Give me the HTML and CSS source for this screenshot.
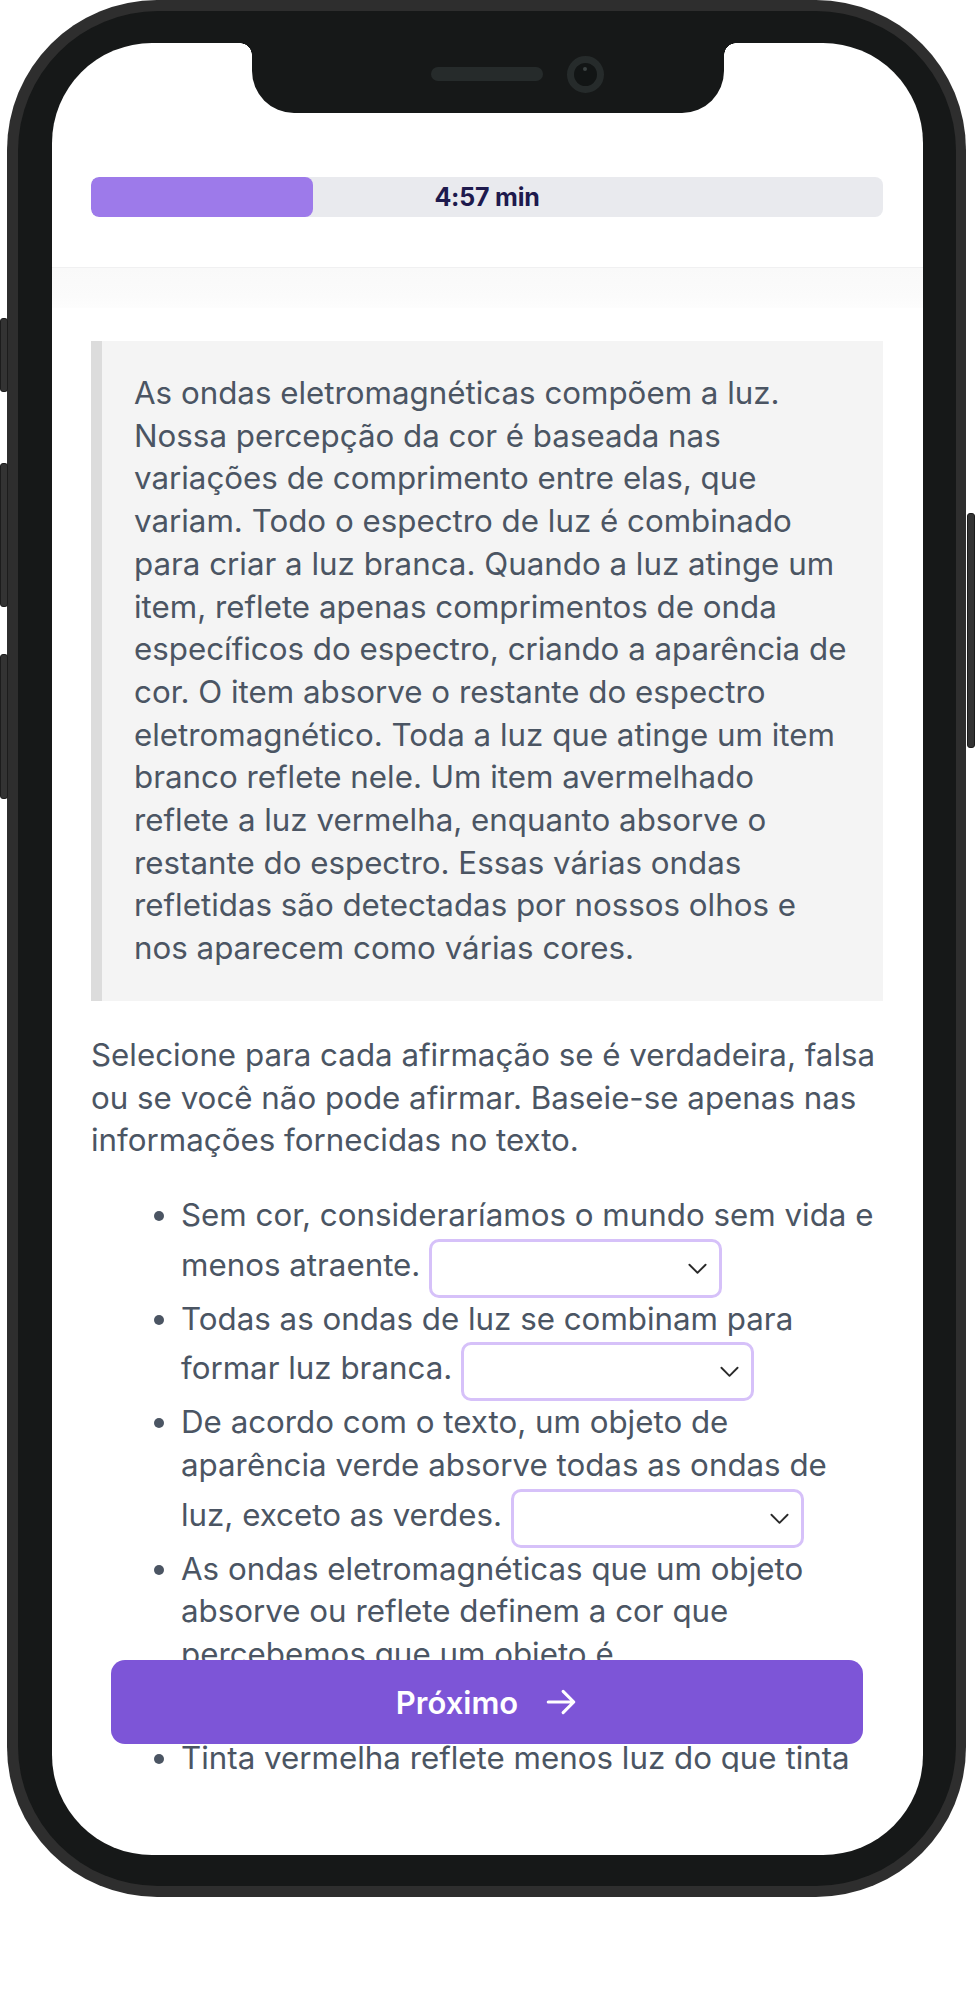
FILE: index.html
```html
<!DOCTYPE html>
<html lang="pt-BR">
<head>
<meta charset="utf-8">
<title>Leitura</title>
<link rel="stylesheet" href="styles.css">
</head>
<body>
<div class="phone">
  <span class="side side-l1"></span>
  <span class="side side-l2"></span>
  <span class="side side-l3"></span>
  <span class="side side-r1"></span>
  <div class="bezel">
    <div class="screen">
      <div class="notch">
        <span class="speaker"></span>
        <span class="camera"><span class="lens-dot"></span></span>
      </div>
      <header class="header">
        <div class="progress">
          <div class="progress-fill" style="width:28%"></div>
          <span class="timer">4:57 min</span>
        </div>
      </header>
      <div class="shade"></div>
      <main class="content">
        <div class="passage">As ondas eletromagnéticas compõem a luz. Nossa percepção da cor é baseada nas variações de comprimento entre elas, que variam. Todo o espectro de luz é combinado para criar a luz branca. Quando a luz atinge um item, reflete apenas comprimentos de onda específicos do espectro, criando a aparência de cor. O item absorve o restante do espectro eletromagnético. Toda a luz que atinge um item branco reflete nele. Um item avermelhado reflete a luz vermelha, enquanto absorve o restante do espectro. Essas várias ondas refletidas são detectadas por nossos olhos e nos aparecem como várias cores.</div>
        <p class="instr">Selecione para cada afirmação se é verdadeira, falsa ou se você não pode afirmar. Baseie-se apenas nas informações fornecidas no texto.</p>
        <ul class="items">
          <li>Sem cor, consideraríamos o mundo sem vida e menos atraente. <span class="pick"><select aria-label="Resposta 1"><option></option><option>Verdadeiro</option><option>Falso</option><option>Não se pode afirmar</option></select><svg class="chev" viewBox="0 0 20 12" aria-hidden="true"><path d="M1.5 1.5 10 10l8.5-8.5"/></svg></span></li>
          <li>Todas as ondas de luz se combinam para formar luz branca. <span class="pick"><select aria-label="Resposta 2"><option></option><option>Verdadeiro</option><option>Falso</option><option>Não se pode afirmar</option></select><svg class="chev" viewBox="0 0 20 12" aria-hidden="true"><path d="M1.5 1.5 10 10l8.5-8.5"/></svg></span></li>
          <li>De acordo com o texto, um objeto de aparência verde absorve todas as ondas de luz, exceto as verdes. <span class="pick"><select aria-label="Resposta 3"><option></option><option>Verdadeiro</option><option>Falso</option><option>Não se pode afirmar</option></select><svg class="chev" viewBox="0 0 20 12" aria-hidden="true"><path d="M1.5 1.5 10 10l8.5-8.5"/></svg></span></li>
          <li>As ondas eletromagnéticas que um objeto absorve ou reflete definem a cor que percebemos que um objeto é. <span class="pick"><select aria-label="Resposta 4"><option></option><option>Verdadeiro</option><option>Falso</option><option>Não se pode afirmar</option></select><svg class="chev" viewBox="0 0 20 12" aria-hidden="true"><path d="M1.5 1.5 10 10l8.5-8.5"/></svg></span></li>
          <li>Tinta vermelha reflete menos luz do que tinta branca. <span class="pick"><select aria-label="Resposta 5"><option></option><option>Verdadeiro</option><option>Falso</option><option>Não se pode afirmar</option></select><svg class="chev" viewBox="0 0 20 12" aria-hidden="true"><path d="M1.5 1.5 10 10l8.5-8.5"/></svg></span></li>
        </ul>
      </main>
      <button class="next" type="button">Próximo <svg class="arrow" viewBox="0 0 24 24" aria-hidden="true"><path d="M13.5 4.5 21 12l-7.5 7.5M21 12H3"/></svg></button>
    </div>
  </div>
</div>
</body>
</html>
```

FILE: styles.css
```css
* { box-sizing: border-box; }

body {
  margin: 0;
  background: #ffffff;
  font-family: Inter, "Noto Sans", "Liberation Sans", sans-serif;
}

.phone {
  position: relative;
  margin-left: 7px;
  width: 959px;
  height: 1897px;
  padding: 11px 10px 11px 11px;
  border-radius: 150px;
  background: #2e2e2e;
}

.side {
  position: absolute;
  width: 8px;
  background: #333333;
  border: 1px solid #1c1c1c;
  border-radius: 3px;
}
.side-l1 { left: -7px; top: 318px; height: 74px; }
.side-l2 { left: -7px; top: 463px; height: 144px; }
.side-l3 { left: -7px; top: 654px; height: 145px; }
.side-r1 { right: -9px; top: 513px; height: 235px; }

.bezel {
  height: 100%;
  padding: 32px 33px 31px 34px;
  border-radius: 140px;
  background: #161818;
}

.screen {
  position: relative;
  height: 100%;
  display: flex;
  flex-direction: column;
  padding-bottom: 83px;
  background: #ffffff;
  border-radius: 100px;
  overflow: hidden;
}

.notch {
  position: absolute;
  top: 0;
  left: 200px;
  width: 472px;
  height: 70px;
  display: flex;
  align-items: center;
  gap: 24px;
  padding: 0 0 8px 179px;
  background: #161818;
  border-radius: 0 0 42px 42px;
  z-index: 3;
}
.notch::before,
.notch::after {
  content: "";
  position: absolute;
  top: 0;
  width: 12px;
  height: 12px;
}
.notch::before {
  left: -12px;
  background: radial-gradient(circle at 0 100%, transparent 11.5px, #161818 12px);
}
.notch::after {
  right: -12px;
  background: radial-gradient(circle at 100% 100%, transparent 11.5px, #161818 12px);
}
.speaker {
  width: 112px;
  height: 14px;
  border-radius: 7px;
  background: #262b2b;
}
.camera {
  position: relative;
  width: 37px;
  height: 37px;
  border-radius: 50%;
  border: 7px solid #262b2b;
  background: #121515;
}
.lens-dot {
  position: absolute;
  left: 9px;
  top: 4px;
  width: 4px;
  height: 4px;
  border-radius: 50%;
  background: #3b4242;
}

.header {
  flex: none;
  padding: 134px 40px 50px 39px;
  border-bottom: 1px solid #f0f0f1;
}
.progress {
  position: relative;
  height: 40px;
  display: flex;
  align-items: center;
  justify-content: center;
  border-radius: 8px;
  background: #e9eaee;
  overflow: hidden;
}
.progress-fill {
  position: absolute;
  left: 0;
  top: 0;
  bottom: 0;
  border-radius: 8px;
  background: #9d7aea;
}
.timer {
  position: relative;
  font-size: 25px;
  font-weight: 700;
  color: #1e1a4d;
  letter-spacing: -0.2px;
}

.shade {
  flex: none;
  height: 40px;
  background: linear-gradient(#f9f9f9, #fbfbfb 70%, #fdfdfd);
}

.content {
  flex: 1;
  min-height: 0;
  overflow: hidden;
  padding: 33px 40px 0 39px;
  color: #4b5563;
  font-size: 31.3px;
  line-height: 42.7px;
}

.passage {
  margin: 0 0 33px;
  padding: 31px 32px 31px 32px;
  background: #f4f4f4;
  border-left: 11px solid #dcdcdc;
}

.instr {
  margin: 0 0 32px;
}

.items {
  margin: 0;
  padding: 0 8px 0 90px;
}

.pick {
  position: relative;
  display: inline-block;
  vertical-align: middle;
  width: 293px;
  height: 59px;
  margin: 2px 0 0;
}
.pick select {
  appearance: none;
  -webkit-appearance: none;
  display: block;
  width: 100%;
  height: 100%;
  margin: 0;
  border: 3.5px solid #d6c1f9;
  border-radius: 10px;
  background: #ffffff;
  font: inherit;
  color: #4b5563;
}
.chev {
  position: absolute;
  right: 15px;
  top: 24px;
  width: 19px;
  height: 12px;
  fill: none;
  stroke: #2a2a2a;
  stroke-width: 2;
  stroke-linecap: round;
  stroke-linejoin: round;
  pointer-events: none;
}

.next {
  position: absolute;
  left: 59px;
  right: 60px;
  bottom: 111px;
  height: 84px;
  display: flex;
  align-items: center;
  justify-content: center;
  gap: 26px;
  border: none;
  border-radius: 14px;
  background: #7d55d7;
  color: #ffffff;
  font-family: inherit;
  font-size: 31px;
  font-weight: 600;
  z-index: 2;
}
.arrow {
  width: 34px;
  height: 34px;
  fill: none;
  stroke: #ffffff;
  stroke-width: 2.2;
  stroke-linecap: round;
  stroke-linejoin: round;
}
```
